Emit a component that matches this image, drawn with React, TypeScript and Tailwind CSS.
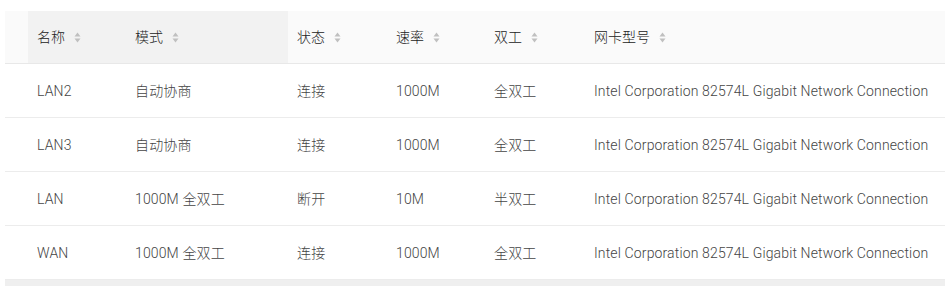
import { Fragment } from 'react'

type Row = { name: string; mode: string; state: string; speed: string; duplex: string; nic: string }

const rows: Row[] = [
  { name: 'LAN2', mode: '自动协商', state: '连接', speed: '1000M', duplex: '全双工', nic: 'Intel Corporation 82574L Gigabit Network Connection' },
  { name: 'LAN3', mode: '自动协商', state: '连接', speed: '1000M', duplex: '全双工', nic: 'Intel Corporation 82574L Gigabit Network Connection' },
  { name: 'LAN', mode: '1000M 全双工', state: '断开', speed: '10M', duplex: '半双工', nic: 'Intel Corporation 82574L Gigabit Network Connection' },
  { name: 'WAN', mode: '1000M 全双工', state: '连接', speed: '1000M', duplex: '全双工', nic: 'Intel Corporation 82574L Gigabit Network Connection' },
]

const headers = ['名称', '模式', '状态', '速率', '双工', '网卡型号']

function SortIcon() {
  return (
    <svg width="7" height="11" viewBox="0 0 7 11" className="ml-[9px] shrink-0">
      <path d="M3.5 0.5 L6.5 4.5 L0.5 4.5 Z" fill="#c0c0c0" />
      <path d="M0.5 6.5 L6.5 6.5 L3.5 10.5 Z" fill="#c0c0c0" />
    </svg>
  )
}

const grid = 'grid grid-cols-[23px_98px_162px_99px_98px_100px_1fr]'

export default function App() {
  return (
    <div
      className="w-[945px] h-[291px] bg-white pt-[11px] pl-[5px] overflow-hidden text-[14px] font-light"
      style={{ fontFamily: 'Roboto, "Noto Sans CJK SC", sans-serif' }}
    >
      <div className={`${grid} h-[53px] border-b border-[#e8e8e8] bg-[#fafafa] text-[#222]`}>
        <div />
        {headers.map((h, i) => (
          <div
            key={h}
            className={`flex items-center pl-[9px] ${i < 2 ? 'bg-[#f2f2f2]' : ''}`}
          >
            <span>{h}</span>
            <SortIcon />
          </div>
        ))}
      </div>
      {rows.map((r) => (
        <div key={r.name} className={`${grid} h-[54px] border-b border-[#ececec] text-[#444] tracking-[0.14px]`}>
          {['', r.name, r.mode, r.state, r.speed, r.duplex, r.nic].map((c, i) => (
            <Fragment key={i}>
              <div className="flex items-center pl-[9px] pt-[2px] whitespace-nowrap">{c}</div>
            </Fragment>
          ))}
        </div>
      ))}
      <div className="h-[6px] bg-[#efefef]" />
    </div>
  )
}
